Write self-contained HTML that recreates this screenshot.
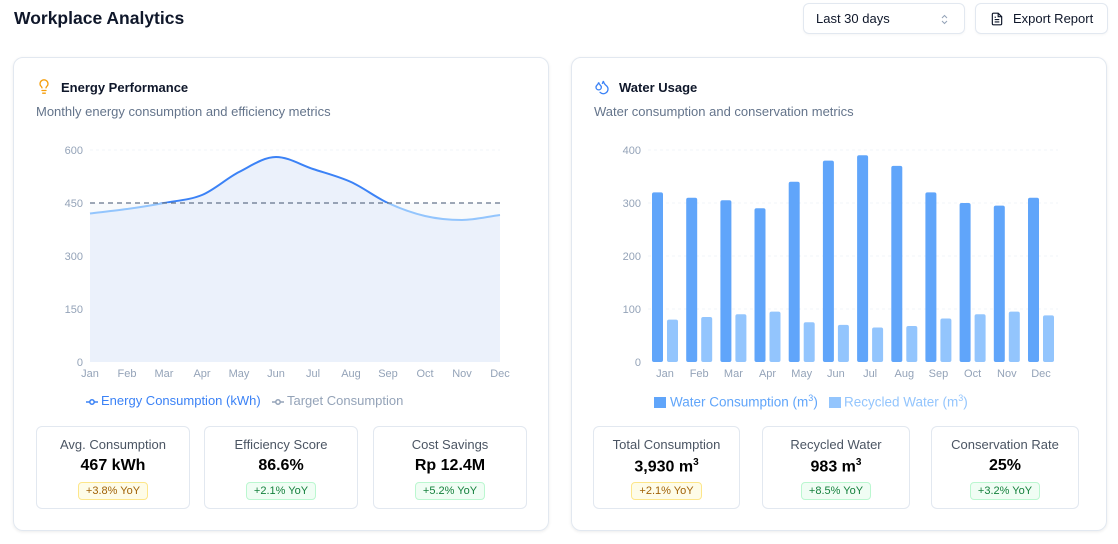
<!DOCTYPE html>
<html><head><meta charset="utf-8"><style>
*{box-sizing:border-box;margin:0;padding:0}
body{width:1118px;height:544px;background:#fff;font-family:"Liberation Sans",sans-serif;position:relative;overflow:hidden;color:#111827}
.abs{position:absolute}
h1{position:absolute;left:14px;top:8px;font-size:17.5px;font-weight:700;color:#0f172a}
.btn{position:absolute;top:3px;height:31px;border:1px solid #e2e8f0;border-radius:6px;font-size:13px;color:#0f172a;display:flex;align-items:center;box-shadow:0 1px 2px rgba(0,0,0,.04)}
.card{position:absolute;top:57px;width:536px;height:474px;border:1px solid #e2e8f0;border-radius:10px;box-shadow:0 1px 3px rgba(0,0,0,.08)}
.ct{position:absolute;top:80px;font-size:13px;font-weight:700;color:#0f172a}
.cs{position:absolute;top:104px;font-size:13px;color:#64748b}
.stat{position:absolute;top:426px;height:83px;border:1px solid #e2e8f0;border-radius:6px;text-align:center}
.stat .l{font-size:13px;color:#4b5563;margin-top:10px}
.stat .v{font-size:16px;font-weight:700;color:#000;margin-top:5px;height:20px}
.stat .v sup{font-size:10px}
.badge{display:inline-block;margin-top:5px;font-size:11px;padding:2px 7px;border-radius:4px;border:1px solid}
.y{background:#fefce8;border-color:#fde68a;color:#a16207}
.g{background:#f0fdf4;border-color:#bbf7d0;color:#15803d}
.leg{position:absolute;top:393px;font-size:13px;white-space:nowrap}
</style></head><body>
<h1>Workplace Analytics</h1>
<div class="btn" style="left:803px;width:162px;padding-left:12px">Last 30 days
<svg style="position:absolute;right:16px;top:10px" width="7" height="11" viewBox="0 0 7 11" fill="none" stroke="#94a3b8" stroke-width="1"><path d="M1 4l2.5-2.5L6 4M1 7l2.5 2.5L6 7"/></svg></div>
<div class="btn" style="left:975px;width:133px;padding-left:14px">
<svg width="14" height="14" viewBox="0 0 24 24" fill="none" stroke="#0f172a" stroke-width="2" style="margin-right:9px"><path d="M14 2H6a2 2 0 0 0-2 2v16a2 2 0 0 0 2 2h12a2 2 0 0 0 2-2V8z"/><path d="M14 2v6h6M16 13H8M16 17H8M10 9H8"/></svg>Export Report</div>

<div class="card" style="left:13px"></div>
<div class="card" style="left:571px"></div>

<svg class="abs" style="left:36px;top:78px" width="16" height="17" viewBox="0 0 24 24" fill="none" stroke="#f59e0b" stroke-width="2" stroke-linecap="round"><path d="M15 14c.2-1 .7-1.7 1.5-2.5 1-.9 1.5-2.2 1.5-3.5A6 6 0 0 0 6 8c0 1 .2 2.2 1.5 3.5.7.7 1.3 1.5 1.5 2.5M9 18h6M10 22h4"/></svg>
<div class="ct" style="left:61px">Energy Performance</div>
<div class="cs" style="left:36px">Monthly energy consumption and efficiency metrics</div>
<svg class="abs" style="left:594px;top:79px" width="16" height="16" viewBox="0 0 24 24" fill="none" stroke="#3b82f6" stroke-width="2" stroke-linecap="round"><path d="M7 16.3c2.2 0 4-1.8 4-4 0-1.2-.6-2.3-1.8-3.3S7.3 6.5 7 5c-.3 1.5-1.1 2.9-2.3 4S3 11.1 3 12.3c0 2.2 1.8 4 4 4z"/><path d="M12.6 6.6A11 11 0 0 0 14 3c.5 2.5 2 4.9 4 6.5s3 3.5 3 5.5a6.98 6.98 0 0 1-11.9 5"/></svg>
<div class="ct" style="left:619px">Water Usage</div>
<div class="cs" style="left:594px">Water consumption and conservation metrics</div>

<svg class="abs" style="left:0;top:0" width="1118" height="544" font-family="Liberation Sans,sans-serif" font-size="11" fill="#94a3b8">
<defs>
<clipPath id="above"><rect x="0" y="0" width="560" height="203"/></clipPath>
<clipPath id="below"><rect x="0" y="203" width="560" height="200"/></clipPath>
</defs>
<g stroke="#f1f5f9" stroke-dasharray="3 3">
<line x1="90" x2="500" y1="150" y2="150"/><line x1="90" x2="500" y1="256" y2="256"/><line x1="90" x2="500" y1="309" y2="309"/>
<line x1="648" x2="1058" y1="150" y2="150"/><line x1="648" x2="1058" y1="203" y2="203"/><line x1="648" x2="1058" y1="256" y2="256"/><line x1="648" x2="1058" y1="309" y2="309"/>
</g>
<g text-anchor="end"><text x="83" y="154">600</text><text x="83" y="207">450</text><text x="83" y="260">300</text><text x="83" y="313">150</text><text x="83" y="366">0</text>
<text x="641" y="154">400</text><text x="641" y="207">300</text><text x="641" y="260">200</text><text x="641" y="313">100</text><text x="641" y="366">0</text></g>
<g text-anchor="middle"><text x="90" y="377">Jan</text><text x="127" y="377">Feb</text><text x="164" y="377">Mar</text><text x="202" y="377">Apr</text><text x="239" y="377">May</text><text x="276" y="377">Jun</text><text x="313" y="377">Jul</text><text x="351" y="377">Aug</text><text x="388" y="377">Sep</text><text x="425" y="377">Oct</text><text x="462" y="377">Nov</text><text x="500" y="377">Dec</text>
<text x="665" y="377">Jan</text><text x="699.2" y="377">Feb</text><text x="733.4" y="377">Mar</text><text x="767.5" y="377">Apr</text><text x="801.7" y="377">May</text><text x="835.9" y="377">Jun</text><text x="870.1" y="377">Jul</text><text x="904.3" y="377">Aug</text><text x="938.4" y="377">Sep</text><text x="972.6" y="377">Oct</text><text x="1006.8" y="377">Nov</text><text x="1041" y="377">Dec</text></g>
<path id="ln" d="M90,213.5 C102.4,212 114.6,210.7 127,209 C139.4,207.3 151.6,205.4 164,203 C176.4,200.6 189.6,200.1 202,195 C214.4,189.9 226.6,178.3 239,172 C251.4,165.7 263.6,157 276,157 C288.4,157 300.6,164.9 313,169 C325.4,173.1 338.6,176.4 351,182 C363.4,187.6 375.6,197.3 388,203 C400.4,208.7 412.6,213.1 425,216 C437.4,218.9 449.6,220 462,220 C474.4,220 487.6,216.6 500,215" fill="none"/>
<rect x="90" y="203" width="410" height="159" fill="#f8fafc"/>
<path d="M90,213.5 C102.4,212 114.6,210.7 127,209 C139.4,207.3 151.6,205.4 164,203 C176.4,200.6 189.6,200.1 202,195 C214.4,189.9 226.6,178.3 239,172 C251.4,165.7 263.6,157 276,157 C288.4,157 300.6,164.9 313,169 C325.4,173.1 338.6,176.4 351,182 C363.4,187.6 375.6,197.3 388,203 C400.4,208.7 412.6,213.1 425,216 C437.4,218.9 449.6,220 462,220 C474.4,220 487.6,216.6 500,215 L500,362 L90,362 Z" fill="#ebf1fb"/>
<use href="#ln" stroke="#3b82f6" stroke-width="2" clip-path="url(#above)"/>
<use href="#ln" stroke="#93c5fd" stroke-width="2" clip-path="url(#below)"/>
<line x1="90" x2="500" y1="203" y2="203" stroke="#64748b" stroke-width="1.2" stroke-dasharray="5 4"/>
<g fill="#60a5fa">
<rect x="652" y="192.4" width="11" height="169.6" rx="2"/><rect x="686.2" y="197.7" width="11" height="164.3" rx="2"/><rect x="720.4" y="200.3" width="11" height="161.7" rx="2"/><rect x="754.5" y="208.3" width="11" height="153.7" rx="2"/><rect x="788.7" y="181.8" width="11" height="180.2" rx="2"/><rect x="822.9" y="160.6" width="11" height="201.4" rx="2"/><rect x="857.1" y="155.3" width="11" height="206.7" rx="2"/><rect x="891.3" y="165.9" width="11" height="196.1" rx="2"/><rect x="925.4" y="192.4" width="11" height="169.6" rx="2"/><rect x="959.6" y="203" width="11" height="159" rx="2"/><rect x="993.8" y="205.6" width="11" height="156.4" rx="2"/><rect x="1028" y="197.7" width="11" height="164.3" rx="2"/>
</g>
<g fill="#93c5fd">
<rect x="667" y="319.6" width="11" height="42.4" rx="2"/><rect x="701.2" y="317" width="11" height="45" rx="2"/><rect x="735.4" y="314.3" width="11" height="47.7" rx="2"/><rect x="769.5" y="311.6" width="11" height="50.4" rx="2"/><rect x="803.7" y="322.2" width="11" height="39.8" rx="2"/><rect x="837.9" y="324.9" width="11" height="37.1" rx="2"/><rect x="872.1" y="327.5" width="11" height="34.5" rx="2"/><rect x="906.3" y="326" width="11" height="36" rx="2"/><rect x="940.4" y="318.5" width="11" height="43.5" rx="2"/><rect x="974.6" y="314.3" width="11" height="47.7" rx="2"/><rect x="1008.8" y="311.6" width="11" height="50.4" rx="2"/><rect x="1043" y="315.4" width="11" height="46.6" rx="2"/>
</g>
<g stroke-width="1.5" fill="#fff"><line x1="86" x2="98" y1="402" y2="402" stroke="#3b82f6"/><circle cx="92" cy="402" r="2.2" stroke="#3b82f6"/>
<line x1="272" x2="284" y1="402" y2="402" stroke="#94a3b8"/><circle cx="278" cy="402" r="2.2" stroke="#94a3b8"/></g>
<rect x="654" y="397" width="12" height="11" fill="#60a5fa"/><rect x="829" y="397" width="12" height="11" fill="#93c5fd"/>
</svg>
<div class="leg" style="left:101px;color:#3b82f6">Energy Consumption (kWh)</div>
<div class="leg" style="left:287px;color:#94a3b8">Target Consumption</div>
<div class="leg" style="left:670px;color:#60a5fa;font-size:13.5px">Water Consumption (m<sup style="font-size:9px">3</sup>)</div>
<div class="leg" style="left:844px;color:#93c5fd;font-size:13.5px">Recycled Water (m<sup style="font-size:9px">3</sup>)</div>

<div class="stat" style="left:36px;width:154px"><div class="l">Avg. Consumption</div><div class="v">467 kWh</div><span class="badge y">+3.8% YoY</span></div>
<div class="stat" style="left:204px;width:154px"><div class="l">Efficiency Score</div><div class="v">86.6%</div><span class="badge g">+2.1% YoY</span></div>
<div class="stat" style="left:373px;width:154px"><div class="l">Cost Savings</div><div class="v">Rp 12.4M</div><span class="badge g">+5.2% YoY</span></div>
<div class="stat" style="left:593px;width:147px"><div class="l">Total Consumption</div><div class="v">3,930 m<sup>3</sup></div><span class="badge y">+2.1% YoY</span></div>
<div class="stat" style="left:762px;width:148px"><div class="l">Recycled Water</div><div class="v">983 m<sup>3</sup></div><span class="badge g">+8.5% YoY</span></div>
<div class="stat" style="left:931px;width:148px"><div class="l">Conservation Rate</div><div class="v">25%</div><span class="badge g">+3.2% YoY</span></div>
</body></html>
